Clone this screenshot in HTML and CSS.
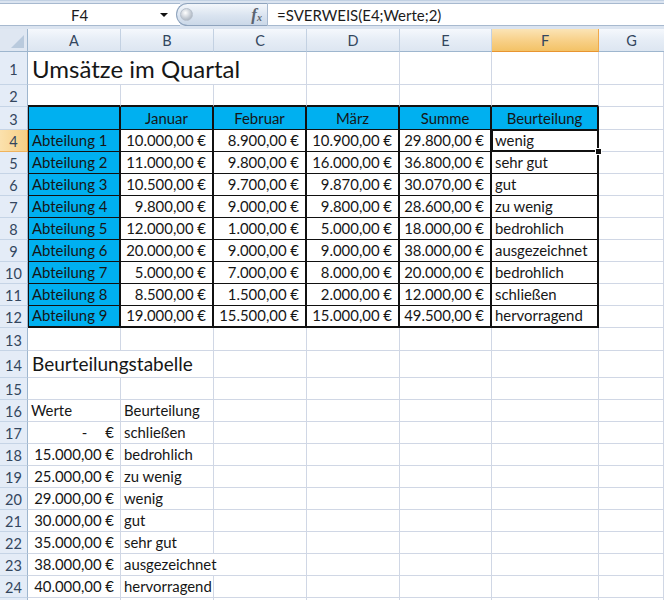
FILE: index.html
```html
<!DOCTYPE html>
<html lang="de">
<head>
<meta charset="utf-8">
<title>Umsätze im Quartal</title>
<link rel="stylesheet" href="styles.css">
</head>
<body>
<div class="app">
  <div class="fbar">
    <div class="namebox"><span class="nb-text">F4</span><span class="nb-arrow"></span></div>
    <div class="pill"><span class="knob"></span><span class="fx">f<sub>x</sub></span></div>
    <div class="formula">=SVERWEIS(E4;Werte;2)</div>
  </div>

  <div class="sheet">
    <!-- header -->
    <div class="corner"><span class="tri"></span></div>
    <div class="ch">A</div><div class="ch">B</div><div class="ch">C</div><div class="ch">D</div><div class="ch">E</div><div class="ch sel">F</div><div class="ch last">G</div>

    <!-- row 1 -->
    <div class="rh">1</div>
    <div class="c title span3">Umsätze im Quartal</div><div class="c"></div><div class="c"></div><div class="c"></div><div class="c"></div>

    <!-- row 2 -->
    <div class="rh">2</div>
    <div class="c tt"></div><div class="c tt"></div><div class="c tt"></div><div class="c tt"></div><div class="c tt"></div><div class="c tt"></div><div class="c"></div>

    <!-- row 3 -->
    <div class="rh">3</div>
    <div class="c t cy tl"></div><div class="c t cy ctr">Januar</div><div class="c t cy ctr">Februar</div><div class="c t cy ctr">März</div><div class="c t cy ctr">Summe</div><div class="c t cy ctr">Beurteilung</div><div class="c"></div>

    <!-- row 4 -->
    <div class="rh sel">4</div>
    <div class="c t cy tl">Abteilung 1</div><div class="c t num">10.000,00 €</div><div class="c t num">8.900,00 €</div><div class="c t num">10.900,00 €</div><div class="c t num">29.800,00 €</div><div class="c t txt active">wenig<span class="selbox"><span class="handle"></span></span></div><div class="c"></div>

    <div class="rh">5</div>
    <div class="c t cy tl">Abteilung 2</div><div class="c t num">11.000,00 €</div><div class="c t num">9.800,00 €</div><div class="c t num">16.000,00 €</div><div class="c t num">36.800,00 €</div><div class="c t txt">sehr gut</div><div class="c"></div>

    <div class="rh">6</div>
    <div class="c t cy tl">Abteilung 3</div><div class="c t num">10.500,00 €</div><div class="c t num">9.700,00 €</div><div class="c t num">9.870,00 €</div><div class="c t num">30.070,00 €</div><div class="c t txt">gut</div><div class="c"></div>

    <div class="rh">7</div>
    <div class="c t cy tl">Abteilung 4</div><div class="c t num">9.800,00 €</div><div class="c t num">9.000,00 €</div><div class="c t num">9.800,00 €</div><div class="c t num">28.600,00 €</div><div class="c t txt">zu wenig</div><div class="c"></div>

    <div class="rh">8</div>
    <div class="c t cy tl">Abteilung 5</div><div class="c t num">12.000,00 €</div><div class="c t num">1.000,00 €</div><div class="c t num">5.000,00 €</div><div class="c t num">18.000,00 €</div><div class="c t txt">bedrohlich</div><div class="c"></div>

    <div class="rh">9</div>
    <div class="c t cy tl">Abteilung 6</div><div class="c t num">20.000,00 €</div><div class="c t num">9.000,00 €</div><div class="c t num">9.000,00 €</div><div class="c t num">38.000,00 €</div><div class="c t txt">ausgezeichnet</div><div class="c"></div>

    <div class="rh">10</div>
    <div class="c t cy tl">Abteilung 7</div><div class="c t num">5.000,00 €</div><div class="c t num">7.000,00 €</div><div class="c t num">8.000,00 €</div><div class="c t num">20.000,00 €</div><div class="c t txt">bedrohlich</div><div class="c"></div>

    <div class="rh">11</div>
    <div class="c t cy tl">Abteilung 8</div><div class="c t num">8.500,00 €</div><div class="c t num">1.500,00 €</div><div class="c t num">2.000,00 €</div><div class="c t num">12.000,00 €</div><div class="c t txt">schließen</div><div class="c"></div>

    <div class="rh">12</div>
    <div class="c t cy tl tb">Abteilung 9</div><div class="c t num tb">19.000,00 €</div><div class="c t num tb">15.500,00 €</div><div class="c t num tb">15.000,00 €</div><div class="c t num tb">49.500,00 €</div><div class="c t txt tb">hervorragend</div><div class="c"></div>

    <!-- row 13 -->
    <div class="rh">13</div>
    <div class="c"></div><div class="c"></div><div class="c"></div><div class="c"></div><div class="c"></div><div class="c"></div><div class="c"></div>

    <!-- row 14 -->
    <div class="rh">14</div>
    <div class="c sub span2">Beurteilungstabelle</div><div class="c"></div><div class="c"></div><div class="c"></div><div class="c"></div><div class="c"></div>

    <div class="rh">15</div>
    <div class="c"></div><div class="c"></div><div class="c"></div><div class="c"></div><div class="c"></div><div class="c"></div><div class="c"></div>

    <div class="rh">16</div>
    <div class="c lt">Werte</div><div class="c lt">Beurteilung</div><div class="c"></div><div class="c"></div><div class="c"></div><div class="c"></div><div class="c"></div>

    <div class="rh">17</div>
    <div class="c acc"><span class="dash">-</span><span>€</span></div><div class="c lt">schließen</div><div class="c"></div><div class="c"></div><div class="c"></div><div class="c"></div><div class="c"></div>

    <div class="rh">18</div>
    <div class="c num2">15.000,00 €</div><div class="c lt">bedrohlich</div><div class="c"></div><div class="c"></div><div class="c"></div><div class="c"></div><div class="c"></div>

    <div class="rh">19</div>
    <div class="c num2">25.000,00 €</div><div class="c lt">zu wenig</div><div class="c"></div><div class="c"></div><div class="c"></div><div class="c"></div><div class="c"></div>

    <div class="rh">20</div>
    <div class="c num2">29.000,00 €</div><div class="c lt">wenig</div><div class="c"></div><div class="c"></div><div class="c"></div><div class="c"></div><div class="c"></div>

    <div class="rh">21</div>
    <div class="c num2">30.000,00 €</div><div class="c lt">gut</div><div class="c"></div><div class="c"></div><div class="c"></div><div class="c"></div><div class="c"></div>

    <div class="rh">22</div>
    <div class="c num2">35.000,00 €</div><div class="c lt">sehr gut</div><div class="c"></div><div class="c"></div><div class="c"></div><div class="c"></div><div class="c"></div>

    <div class="rh">23</div>
    <div class="c num2">38.000,00 €</div><div class="c lt span2">ausgezeichnet</div><div class="c"></div><div class="c"></div><div class="c"></div><div class="c"></div>

    <div class="rh">24</div>
    <div class="c num2">40.000,00 €</div><div class="c lt">hervorragend</div><div class="c"></div><div class="c"></div><div class="c"></div><div class="c"></div><div class="c"></div>

    <div class="rh"></div>
    <div class="c"></div><div class="c"></div><div class="c"></div><div class="c"></div><div class="c"></div><div class="c"></div><div class="c"></div>
  </div>
</div>
</body>
</html>
```
FILE: styles.css
```css
* { box-sizing: border-box; }
html, body { margin: 0; padding: 0; background: #fff; }
body { width: 664px; height: 600px; overflow: hidden; font-family: Lato, "Open Sans", sans-serif; color: #161616; }

.app { width: 664px; }

/* formula bar */
.fbar {
  height: 29px;
  display: flex;
  align-items: stretch;
  padding: 2px 0 3px;
  background: #dbe4f0;
  border-top: 1px solid #c2d1e3;
}
.namebox {
  width: 180px;
  background: #fff;
  border-top: 1px solid #a7b9cf;
  border-bottom: 1px solid #a7b9cf;
  display: flex;
  align-items: center;
  font-size: 15px;
  color: #1b1b1b;
}
.nb-text { margin-left: 71px; }
.nb-arrow {
  margin-left: auto;
  margin-right: 12px;
  width: 0; height: 0;
  border-left: 4px solid transparent;
  border-right: 4px solid transparent;
  border-top: 4px solid #111;
}
.pill {
  margin-left: -4px;
  width: 92px;
  border: 1px solid #8ea3bd;
  border-right: 1px solid #a7b9cf;
  border-radius: 12px 0 0 12px;
  background: linear-gradient(#f4f7fb, #dae4f0 55%, #cbd8e8);
  display: flex;
  align-items: center;
  padding-left: 3px;
}
.knob {
  width: 13px; height: 13px;
  border-radius: 50%;
  background: radial-gradient(circle at 40% 35%, #ffffff, #c4cbd4 55%, #9aa4b0);
  border: 1px solid #b7c0cc;
}
.fx {
  margin-left: auto;
  margin-right: 5px;
  font-family: "Liberation Serif", serif;
  font-style: italic;
  font-weight: bold;
  font-size: 17px;
  color: #5b6470;
  line-height: 1;
}
.fx sub { font-size: 10px; vertical-align: -1px; }
.formula {
  flex: 1;
  background: #fff;
  border-top: 1px solid #a7b9cf;
  border-bottom: 1px solid #a7b9cf;
  display: flex;
  align-items: center;
  padding-left: 9px;
  font-size: 15px;
  color: #1b1b1b;
}

/* sheet */
.sheet {
  display: grid;
  grid-template-columns: 28px 93px 93px 93px 93px 92px 107px 65px;
  grid-template-rows: 23px 33px 22px 23px repeat(9, 22px) 23px 27px 22px repeat(9, 22px) 10px;
  font-size: 14.9px;
}
.corner {
  background: #dfe7f2;
  border-right: 1px solid #9eb6ce;
  border-bottom: 1px solid #9eb6ce;
  position: relative;
}
.tri {
  position: absolute;
  right: 3px; bottom: 3px;
  width: 0; height: 0;
  border-left: 13px solid transparent;
  border-bottom: 13px solid #b9cadd;
}
.ch {
  background: linear-gradient(#f5f8fc, #e6edf6 50%, #dde6f1);
  border-right: 1px solid #c3d1e2;
  border-bottom: 1px solid #9eb6ce;
  display: flex;
  align-items: center;
  justify-content: center;
  color: #33465e;
  font-size: 14.5px;
}
.ch.sel {
  background: linear-gradient(#fbe4b6, #f8d18a 50%, #f3c266);
  border-right: 1px solid #f0a94a;
  border-bottom: 1px solid #e89530;
}
.ch.last { border-right: none; }
.rh {
  background: #e4ecf7;
  border-right: 1px solid #9eb6ce;
  border-bottom: 1px solid #c5d4e6;
  display: flex;
  align-items: center;
  justify-content: center;
  color: #33465e;
  font-size: 14.5px;
  padding-top: 2px;
}
.rh.sel {
  background: linear-gradient(90deg, #fbe1ad, #f7cf85);
  border-right: 1px solid #e89530;
  border-bottom: 1px solid #f0b35c;
}

.c {
  border-right: 1px solid #d0d7e5;
  border-bottom: 1px solid #d0d7e5;
  display: flex;
  align-items: flex-end;
  padding: 0 3px 1px;
  white-space: nowrap;
  line-height: 19px;
}
.span3 { grid-column: span 3; }
.span2 { grid-column: span 2; }
.title { font-size: 24px; line-height: 30px; padding-left: 4px; padding-bottom: 0; }
.sub { font-size: 19px; line-height: 26px; padding-left: 4px; padding-bottom: 0; }

.tt { border-bottom: 2px solid #111; }
.t { border-right: 2px solid #111; border-bottom: 1px solid #111; }
.tb { border-bottom: 2px solid #111; }
.cy { background: #00b0f0; }
.tl { border-left: 1px solid #111; padding-left: 3px; }
.ctr { justify-content: center; }
.num { justify-content: flex-end; padding-right: 6px; }
.txt { padding-left: 3px; }
.num2 { justify-content: flex-end; padding-right: 6px; }
.lt { padding-left: 3px; }
.acc { justify-content: flex-end; padding-right: 6px; }
.acc .dash { margin-right: 18px; }

.active { position: relative; }
.selbox {
  position: absolute;
  left: -1px; top: -1px; right: -2px; bottom: -1px;
  border: 2px solid #111;
  box-shadow: inset 0 0 0 1px #fff;
  pointer-events: none;
}
.handle {
  position: absolute;
  right: -5px; bottom: -5px;
  width: 7px; height: 7px;
  background: #111;
  border: 1px solid #fff;
}
```
